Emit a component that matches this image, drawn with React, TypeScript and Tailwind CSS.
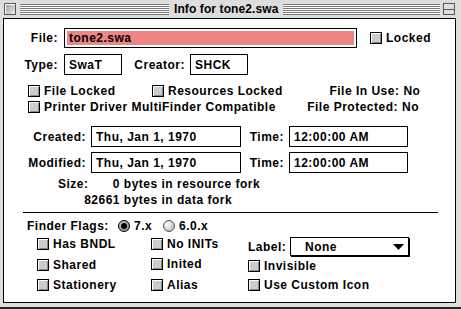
const Check = () => (
  <span className="w-[12px] h-[12px] shrink-0 border border-black bg-[#cccccc] shadow-[inset_1px_1px_0_#ffffff,inset_-1px_-1px_0_#888888]" />
)

const Radio = ({ on }: { on?: boolean }) => (
  <span
    className={
      on
        ? "w-[12px] h-[12px] shrink-0 rounded-full border border-black bg-[radial-gradient(circle_at_35%_35%,#dddddd,#777777)] flex items-center justify-center"
        : "w-[12px] h-[12px] shrink-0 rounded-full border border-[#555555] bg-[radial-gradient(circle_at_35%_35%,#ffffff,#aaaaaa)]"
    }
  >
    {on && <span className="w-[6px] h-[6px] rounded-full bg-black" />}
  </span>
)

const CheckItem = ({ label }: { label: string }) => (
  <span className="flex items-center gap-[4px] whitespace-nowrap">
    <Check />
    <span>{label}</span>
  </span>
)

const Field = ({ value, className }: { value: string; className: string }) => (
  <span className={`flex items-center border border-black bg-white pl-[4px] whitespace-nowrap ${className}`}>
    {value}
  </span>
)

const Stripes = ({ className }: { className: string }) => (
  <div
    className={`h-[11px] bg-[repeating-linear-gradient(to_bottom,#777777_0px,#777777_1px,#ffffff_1px,#ffffff_2px)] ${className}`}
  />
)

export default function App() {
  return (
    <div className="w-[461px] h-[309px] bg-[#dddddd] border-b-2 border-[#222222] flex flex-col font-['Liberation_Sans',Arial,sans-serif] font-bold text-[12px] leading-none text-black overflow-hidden">
      {/* title bar */}
      <div className="h-[18px] flex items-center pl-[4px] pr-[6px]">
        <span className="w-[12px] h-[12px] border border-[#555555] bg-[linear-gradient(135deg,#999999,#eeeeee)] shadow-[inset_1px_1px_0_#ffffff]" />
        <Stripes className="ml-[4px] w-[149px]" />
        <span className="px-[5px] text-[12px] whitespace-nowrap tracking-[0.1px]">Info for tone2.swa</span>
        <Stripes className="flex-1" />
        <span className="ml-[3px] w-[12px] h-[12px] border border-[#555555] bg-[#dddddd] flex items-center">
          <span className="w-full h-px bg-[#555555]" />
        </span>
      </div>

      {/* content */}
      <div className="ml-[3px] w-[453px] h-[285px] border border-black bg-white flex flex-col tracking-[0.5px]">
        {/* File */}
        <div className="flex items-center mt-[9px] h-[20px]">
          <span className="w-[54px] text-right">File:</span>
          <Field value="tone2.swa" className="ml-[6px] w-[293px] h-[20px] !bg-[#ee8484] shadow-[inset_0_0_0_2px_#ffffff]" />
          <span className="ml-[13px]">
            <CheckItem label="Locked" />
          </span>
        </div>

        {/* Type / Creator */}
        <div className="flex items-center mt-[6px] h-[21px]">
          <span className="w-[54px] text-right">Type:</span>
          <Field value="SwaT" className="ml-[6px] w-[58px] h-[21px]" />
          <span className="w-[63px] text-right">Creator:</span>
          <Field value="SHCK" className="ml-[5px] w-[58px] h-[21px]" />
        </div>

        {/* attributes */}
        <div className="flex items-center mt-[8px] h-[16px]">
          <div className="flex-1 flex pl-[24px]">
            <span className="w-[124px]">
              <CheckItem label="File Locked" />
            </span>
            <CheckItem label="Resources Locked" />
          </div>
          <span className="w-[120px] text-right">File In Use:</span>
          <span className="ml-[4px] w-[53px]">No</span>
        </div>
        <div className="flex items-center h-[16px]">
          <div className="flex-1 flex pl-[24px]">
            <CheckItem label="Printer Driver MultiFinder Compatible" />
          </div>
          <span className="w-[120px] text-right">File Protected:</span>
          <span className="ml-[4px] w-[53px]">No</span>
        </div>

        {/* dates */}
        <div className="flex items-center mt-[11px] h-[21px]">
          <span className="w-[82px] text-right">Created:</span>
          <Field value="Thu, Jan 1, 1970" className="ml-[5px] w-[150px] h-[21px]" />
          <span className="w-[43px] text-right">Time:</span>
          <Field value="12:00:00 AM" className="ml-[5px] w-[119px] h-[21px]" />
        </div>
        <div className="flex items-center mt-[5px] h-[21px]">
          <span className="w-[82px] text-right">Modified:</span>
          <Field value="Thu, Jan 1, 1970" className="ml-[5px] w-[150px] h-[21px]" />
          <span className="w-[43px] text-right">Time:</span>
          <Field value="12:00:00 AM" className="ml-[5px] w-[119px] h-[21px]" />
        </div>

        {/* size */}
        <div className="flex items-center mt-[3px] h-[16px] whitespace-nowrap">
          <span className="w-[116px] flex justify-between pl-[54px]">
            <span>Size:</span>
            <span>0</span>
          </span>
          <span>&nbsp;bytes in resource fork</span>
        </div>
        <div className="flex items-center h-[16px] whitespace-nowrap">
          <span className="w-[116px] text-right">82661</span>
          <span>&nbsp;bytes in data fork</span>
        </div>

        <div className="mt-[4px] ml-[19px] w-[415px] h-px bg-black" />

        {/* finder flags */}
        <div className="flex items-center mt-[5px] h-[16px] pl-[23px]">
          <span className="w-[91px]">Finder Flags:</span>
          <Radio on />
          <span className="ml-[4px] w-[29px]">7.x</span>
          <Radio />
          <span className="ml-[4px]">6.0.x</span>
        </div>

        <div className="flex pl-[33px]">
          <div className="w-[114px] flex flex-col">
            <div className="h-[20px] flex items-center"><CheckItem label="Has BNDL" /></div>
            <div className="h-[21px] flex items-center"><CheckItem label="Shared" /></div>
            <div className="h-[20px] flex items-center"><CheckItem label="Stationery" /></div>
          </div>
          <div className="w-[97px] flex flex-col">
            <div className="h-[19px] flex items-center"><CheckItem label="No INITs" /></div>
            <div className="h-[21px] flex items-center"><CheckItem label="Inited" /></div>
            <div className="h-[21px] flex items-center"><CheckItem label="Alias" /></div>
          </div>
          <div className="flex flex-col">
            <div className="mt-[3px] h-[19px] flex items-center">
              <span className="w-[42px]">Label:</span>
              <span className="w-[119px] h-[19px] border border-black shadow-[1px_1px_0_#000000] flex items-center pl-[14px] pr-[4px]">
                <span className="flex-1">None</span>
                <svg width="11" height="6" viewBox="0 0 11 6">
                  <polygon points="0,0 11,0 5.5,6" fill="#000000" />
                </svg>
              </span>
            </div>
            <div className="h-[18px] flex items-center mt-px"><CheckItem label="Invisible" /></div>
            <div className="h-[20px] flex items-center"><CheckItem label="Use Custom Icon" /></div>
          </div>
        </div>
      </div>
    </div>
  )
}
